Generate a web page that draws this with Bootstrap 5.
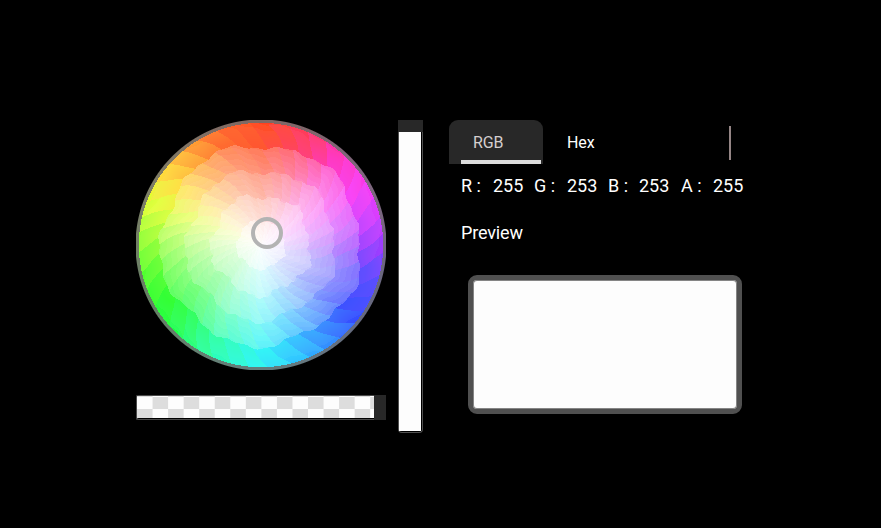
<!DOCTYPE html>
<html lang="en">
<head>
<meta charset="utf-8">
<meta name="viewport" content="width=device-width, initial-scale=1">
<title>Color picker</title>
<link href="https://cdn.jsdelivr.net/npm/bootstrap@5.3.0/dist/css/bootstrap.min.css" rel="stylesheet">
<style>
body{background:#000;color:#fff;font-family:Roboto,sans-serif;overflow:hidden}
.picker{padding:120px 0 0 136px;gap:12px}
.wheel-box{width:250px;height:250px}
.wheel-box canvas{width:250px;height:250px}
.wheel-handle{left:115px;top:97px;width:32px;height:32px;border:4px solid #b3b3b3}
.alpha-slider{width:250px;height:25px;margin-top:25px;background:#282828}
.alpha-track{width:238px;height:25px;background:#000;border:1px solid #4a4a4a;border-right:0;border-radius:3px 0 0 3px}
.checks{height:22px;background:repeating-conic-gradient(#ddd 0 25%,#fdfdfd 0 50%) 0 1px/31.1px 24px}
.value-slider{width:25px;height:313px}
.value-end{height:12px;background:#282828}
.value-track{height:301px;border:1px solid #505050;border-top:0;border-radius:0 0 4px 4px;padding-right:1px}
.value-fill{height:299px;background:#fdfdfd}
.values-panel{width:296px;margin-left:14px}
.picker-tabs{height:44px;font-size:16px}
.picker-tabs .nav-link{height:44px;width:94px;padding:11px 24px;color:#fff;line-height:24px;border-radius:9px 9px 0 0;letter-spacing:-.1px}
.picker-tabs .nav-link.active{background:#282828;color:#d5cfcf}
.picker-tabs .nav-link.active::after{content:"";display:block;height:4px;width:80px;margin:5px 0 0 -12px;background:#ddd}
.tab-rule{width:2px;height:34px;margin:6px 0 0 92px;background:#948585}
.channels{padding:10px 0 0 12px;font-size:18px;line-height:24px;display:grid;grid-template-columns:32px 41px 33px 41px 31px 42px 32px 32px}
.preview-title{margin:23px 0 0 12px;font-size:18px;line-height:24px;letter-spacing:-.15px}
.swatch{width:274px;height:139px;margin:30px 0 0 19px;border:5px solid #505050;border-radius:9px;background:#fdfdfd;box-shadow:inset 0 0 0 1px #858585}
</style>
<script src="https://cdn.jsdelivr.net/npm/bootstrap@5.3.0/dist/js/bootstrap.bundle.min.js"></script>
</head>
<body>
<main class="picker d-flex align-items-start">
  <section>
    <div class="wheel-box position-relative">
      <canvas id="wheel" width="250" height="250" class="d-block"></canvas>
      <div class="wheel-handle position-absolute rounded-circle"></div>
    </div>
    <div class="alpha-slider"><div class="alpha-track"><div class="checks"></div></div></div>
  </section>
  <div class="value-slider"><div class="value-end"></div><div class="value-track"><div class="value-fill"></div></div></div>
  <section class="values-panel">
    <nav class="nav flex-nowrap picker-tabs">
      <a class="nav-link active">RGB</a>
      <a class="nav-link">Hex</a>
      <span class="tab-rule"></span>
    </nav>
    <div class="channels">
      <span>R :</span><span>255</span><span>G :</span><span>253</span><span>B :</span><span>253</span><span>A :</span><span>255</span>
    </div>
    <div class="preview-title">Preview</div>
    <div class="swatch"></div>
  </section>
</main>
<script>
// Rim colours, clockwise from the top: [degrees, r, g, b]
const rim = [[0,255,66,25],[14,255,50,62],[28,255,42,115],[40,255,35,185],[60,248,48,245],[76,205,50,255],[90,150,48,255],[105,80,58,255],[125,40,62,255],[143,38,130,255],[163,35,200,255],[180,28,245,245],[203,30,255,170],[224,30,255,80],[240,28,255,30],[256,80,255,35],[272,145,255,40],[290,225,255,48],[305,255,220,48],[320,255,165,40],[340,255,90,25],[360,255,66,25]];
function rimColor(a) {
  a = (a + 360) % 360;
  let i = 0;
  while (i < rim.length - 2 && rim[i + 1][0] <= a) i++;
  const p = rim[i], q = rim[i + 1], t = (a - p[0]) / (q[0] - p[0]);
  return [1, 2, 3].map(k => p[k] + (q[k] - p[k]) * t);
}
const ctx = document.getElementById('wheel').getContext('2d');
const img = ctx.createImageData(250, 250);
for (let y = 0; y < 250; y++) for (let x = 0; x < 250; x++) {
  const dx = x + .5 - 125, dy = y + .5 - 125, d = Math.hypot(dx, dy);
  if (d > 126) continue;
  const a = Math.atan2(dx, -dy) * 180 / Math.PI, rad = a * Math.PI / 180;
  // Tilted fine bands nested inside five coarse saturation rings
  const wob = .022 * Math.sin(rad * 5 + 1) + .016 * Math.sin(rad * 11 + 2) + .007 * Math.sin(rad * 31);
  const r = d / 124 + wob * Math.min(1, d / 50);
  const ring = Math.floor(r * 4.9 + .05);
  const angle = Math.floor((a + r * 48 + ring * 5) / 9) * 9 + 4 - r * 48 - ring * 5;
  const fine = Math.floor((r + (((a + 360 + r * 48 + ring * 5) % 18) / 18) * .055) * 19) / 19;
  let s = Math.pow(Math.max(0, Math.min(1, fine * .55 + (ring + .35) / 4.9 * .45)), 1.25);
  if (ring >= 4) s = Math.max(s, .9);
  let c = rimColor(angle).map(v => 254 - (254 - v) * s);
  if (d > 122.2) c = rimColor(a).map(v => 112 + (v - 130) * .12);
  const o = (y * 250 + x) * 4;
  img.data[o] = c[0]; img.data[o + 1] = c[1]; img.data[o + 2] = c[2];
  img.data[o + 3] = 255 * Math.min(1, 126 - d);
}
ctx.putImageData(img, 0, 0);
</script>
</body>
</html>
